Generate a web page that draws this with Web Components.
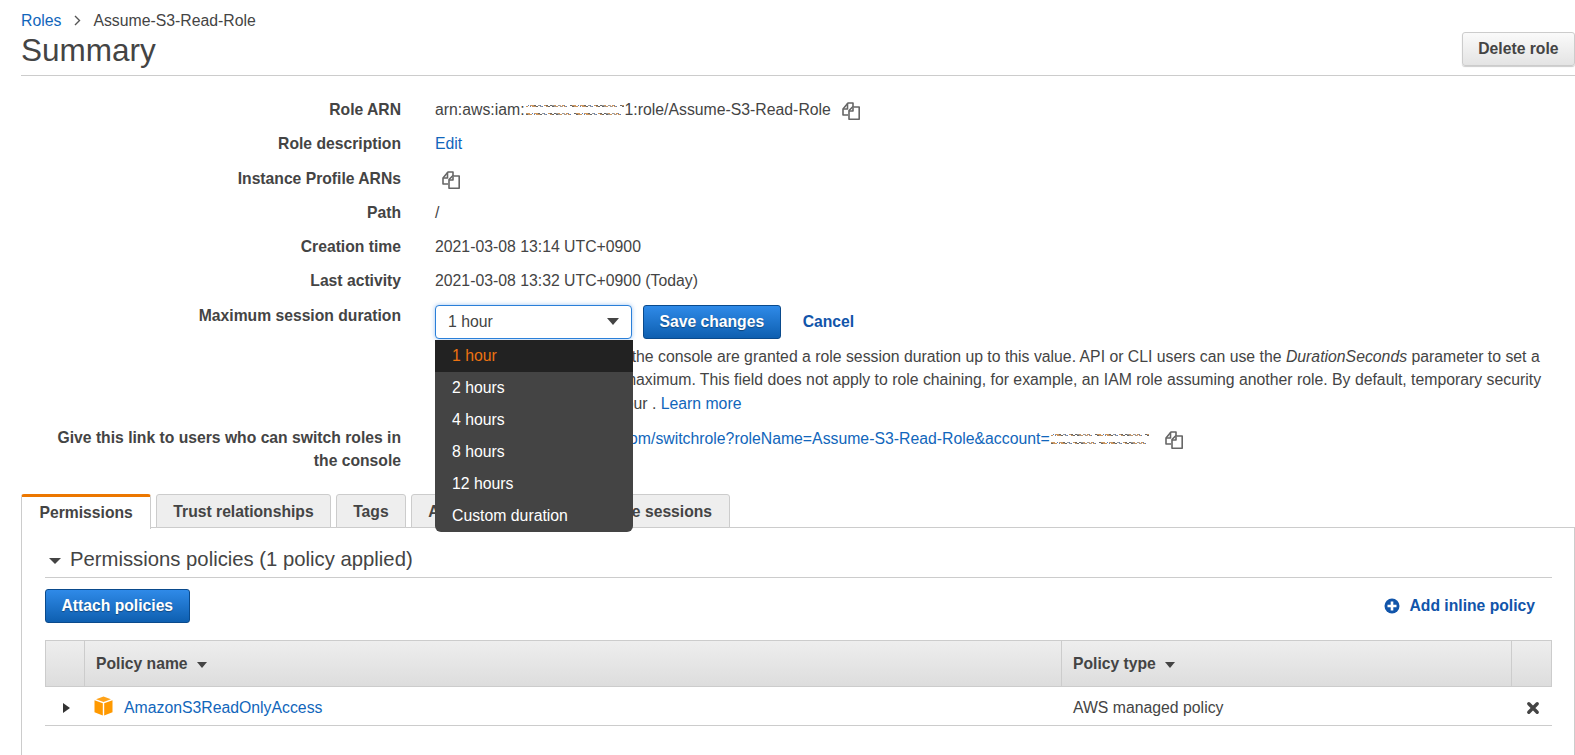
<!DOCTYPE html>
<html>
<head>
<meta charset="utf-8">
<title>Assume-S3-Read-Role</title>
<style>
  html, body { margin: 0; padding: 0; background: #fff; }
  body { font: 15.8px/1.5 "Liberation Sans", Arial, sans-serif; color: #444; overflow: hidden; height: 755px; }
</style>
</head>
<body>
<role-page></role-page>

<script>
const COPY_ICON = `<svg width="20" height="20" viewBox="0 0 20 20" fill="none" stroke="#666" stroke-width="1.600" stroke-linejoin="round">
  <path d="M7 14H2V8l5-6h5v4"/><path d="M6.500 2.500V8H2"/>
  <path d="M8 18.200V9.500l3.500-3.500h6.700v12.200z" fill="#fff"/><path d="M12 6.500V10H8"/></svg>`;

class CopyIcon extends HTMLElement {
  constructor() {
    super();
    this.attachShadow({ mode: 'open' });
    this.shadowRoot.innerHTML = `<style>:host { display: inline-flex; width: 20px; height: 20px; }</style>${COPY_ICON}`;
  }
}
customElements.define('copy-icon', CopyIcon);

// the smudge that hides the account number
class RedactedId extends HTMLElement {
  constructor() {
    super();
    this.attachShadow({ mode: 'open' });
    const colors = ['#888', '#c9955f', '#5f7fb5', '#666', '#d8a880', '#999'];
    let dots = '', seed = 7;
    for (let row of [1, 2, 9, 10]) {
      for (let x = 1; x < 99; x += 2) {
        seed = (seed * 37 + 11) % 101;
        if (seed % 4 == 0) continue;
        dots += `<rect x="${x}" y="${row}" width="${1 + seed % 2}" height="1" fill="${colors[seed % 6]}"/>`;
      }
    }
    this.shadowRoot.innerHTML = `<style>:host { display: inline-block; width: 100px; height: 12px; vertical-align: -1px; }</style>
      <svg width="100" height="12">${dots}</svg>`;
  }
}
customElements.define('redacted-id', RedactedId);

class AwsButton extends HTMLElement {
  constructor() {
    super();
    this.attachShadow({ mode: 'open' });
    this.shadowRoot.innerHTML = `<style>
      :host { display: inline-flex; align-items: center; justify-content: center; box-sizing: border-box; height: 34px; padding: 0 15.500px;
        border-radius: 3px; font-weight: bold; font-size: 15.7px; white-space: nowrap;
        border: 1px solid #ccc; color: #444; background: linear-gradient(#fafafa, #e4e4e4); box-shadow: 0 1px 1px rgba(0,0,0,.2); }
      :host([primary]) { color: #fff; border-color: #0a4a8c; background: linear-gradient(#2f8ae8, #0e5fb0); box-shadow: none;
        text-shadow: 0 1px 1px rgba(0,0,0,.35); }
    </style><slot></slot>`;
  }
}
customElements.define('aws-button', AwsButton);

class DetailRow extends HTMLElement {
  constructor() {
    super();
    this.attachShadow({ mode: 'open' });
    this.shadowRoot.innerHTML = `<style>
      :host { display: grid; grid-template-columns: 380px 1fr; column-gap: 34px; min-height: 34.300px; align-items: start; }
      .label { font-weight: bold; font-size: 15.7px; text-align: right; padding-top: 4px; line-height: 23px; }
      .value { padding-top: 4px; line-height: 23px; min-width: 0; }
    </style>
    <div class="label"><slot name="label"></slot></div>
    <div class="value"><slot></slot></div>`;
  }
}
customElements.define('detail-row', DetailRow);

class DurationSelect extends HTMLElement {
  constructor() {
    super();
    this.attachShadow({ mode: 'open' });
    const items = ['1 hour', '2 hours', '4 hours', '8 hours', '12 hours', 'Custom duration'];
    this.shadowRoot.innerHTML = `<style>
      :host { display: block; position: relative; width: 197px; height: 34px; box-sizing: border-box; }
      .box { box-sizing: border-box; height: 34px; border: 1px solid #2a7fd8; border-radius: 4px; background: #fff;
        box-shadow: 0 0 4px rgba(60,140,230,.5); display: flex; align-items: center; justify-content: space-between; padding: 0 12px; }
      .arrow { width: 0; height: 0; border: 6.500px solid transparent; border-top: 7px solid #444; border-bottom: 0; }
      ul { position: absolute; z-index: 5; left: 0; top: 35px; width: 198px; margin: 0; padding: 0; list-style: none; background: #444;
        border-radius: 0 0 6px 6px; overflow: hidden; }
      li { height: 32px; line-height: 32px; padding-left: 17px; color: #fff; }
      li.sel { background: #222; color: #ec7211; }
    </style>
    <div class="box"><span>1 hour</span><span class="arrow"></span></div>
    <ul>${items.map((t, i) => `<li class="${i == 0 ? 'sel' : ''}">${t}</li>`).join('')}</ul>`;
  }
}
customElements.define('duration-select', DurationSelect);

class TabBar extends HTMLElement {
  constructor() {
    super();
    this.attachShadow({ mode: 'open' });
    const tabs = ['Permissions', 'Trust relationships', 'Tags', 'Access Advisor', 'Revoke sessions'];
    this.shadowRoot.innerHTML = `<style>
      :host { display: flex; gap: 4.500px; height: 34px; font-weight: bold; font-size: 15.7px; position: relative; z-index: 1; }
      div { box-sizing: border-box; height: 34px; padding: 0 16.500px; line-height: 33px; background: #eee; border: 1px solid #ccc;
        border-radius: 3px 3px 0 0; white-space: nowrap; }
      div.on { background: #fff; border-top: 3px solid #ec7700; border-bottom: 0; height: 35px; line-height: 31px; padding: 0 17.500px; }
    </style>${tabs.map((t, i) => `<div class="${i == 0 ? 'on' : ''}">${t}</div>`).join('')}`;
  }
}
customElements.define('tab-bar', TabBar);

class PolicyTable extends HTMLElement {
  constructor() {
    super();
    this.attachShadow({ mode: 'open' });
    const sortArrow = '<i class="sort"></i>';
    this.shadowRoot.innerHTML = `<style>
      :host { display: block; width: 1507px; margin-top: 17px; }
      .row { display: grid; grid-template-columns: 38px 977px 450px 40px; align-items: stretch; }
      .head { height: 47px; box-sizing: border-box; border: 1px solid #ccc; background: linear-gradient(#eee, #ddd); font-weight: bold; font-size: 15.7px; }
      .head > div { border-left: 1px solid #ccc; padding-left: 11px; display: flex; align-items: center; }
      .head > div:first-child { border-left: 0; }
      .sort { display: inline-block; margin-left: 9px; margin-top: 2px; width: 0; height: 0; border: 5.500px solid transparent; border-top: 6px solid #444; border-bottom: 0; }
      .body { height: 39px; border-bottom: 1px solid #ccc; box-sizing: border-box; padding: 3px 1px 0; }
      .body > div { display: flex; align-items: center; }
      .body .type { padding-left: 12px; }
      .name { padding-left: 10px; gap: 11px; }
      .caret { width: 0; height: 0; border: 5.500px solid transparent; border-left: 7px solid #333; border-right: 0; margin-left: 17px; }
      a { color: #16b; text-decoration: none; }
      svg { flex: none; margin-top: -4px; }
      .x { justify-content: flex-end; padding-right: 11px; }
    </style>
    <div class="row head">
      <div></div>
      <div>Policy name ${sortArrow}</div>
      <div>Policy type ${sortArrow}</div>
      <div></div>
    </div>
    <div class="row body">
      <div><span class="caret"></span></div>
      <div class="name">
        <svg width="19" height="20" viewBox="0 0 19 20">
          <path d="M9.500 .500 17 3.200 9.500 6 2 3.200z" fill="#ffa31a"/>
          <path d="M.500 4.300 8.800 7.300V19.500L.500 16.300z" fill="#f90"/>
          <path d="M18.500 4.300 10.200 7.300V19.500L18.500 16.300z" fill="#f90"/>
        </svg>
        <a>AmazonS3ReadOnlyAccess</a>
      </div>
      <div class="type">AWS managed policy</div>
      <div class="x"><svg width="14" height="14" viewBox="0 0 14 14" style="margin:0"><path d="M2.800 2.800l8.400 8.400M11.200 2.800l-8.400 8.400" stroke="#444" stroke-width="3.400" stroke-linecap="round"/></svg></div>
    </div>`;
  }
}
customElements.define('policy-table', PolicyTable);

class RolePage extends HTMLElement {
  constructor() {
    super();
    this.attachShadow({ mode: 'open' });
    this.shadowRoot.innerHTML = `<style>
      :host { display: block; padding: 0 0 0 21px; height: 755px; box-sizing: border-box; overflow: hidden; }
      a { color: #16b; text-decoration: none; }
      .crumbs { padding-top: 9px; line-height: 23px; display: flex; align-items: center; }
      .crumbs svg { margin: 0 12px 0 13px; }
      .title { display: flex; justify-content: space-between; align-items: flex-end; height: 43px; border-bottom: 1px solid #ccc; }
      h1 { margin: 0; font-size: 31.500px; font-weight: normal; line-height: 37px; align-self: flex-start; }
      .title aws-button { margin-bottom: 9px; }
      .details { padding-top: 18px; height: 418px; box-sizing: border-box; }
      .actions { display: flex; align-items: center; gap: 11px; margin-top: 1px; }
      .cancel { font-weight: bold; font-size: 15.7px; margin-left: 11px; color: #15a; }
      .help { line-height: 23.500px; margin-top: 6px; margin-bottom: 7px; white-space: nowrap; }
      .copy-inline { vertical-align: -6px; margin-left: 10px; }
      .copy-link { margin-left: 14px; }
      .copy-first { margin-left: 6px; margin-top: 3px; }
      .switch-link { padding-top: 1px; white-space: nowrap; }
      .panel { border: 1px solid #ccc; border-bottom: 0; margin-top: -1px; padding: 14px 0 0 23px; height: 240px; }
      h2 { margin: 0; font-size: 20.300px; font-weight: normal; line-height: 33px; height: 36px; box-sizing: border-box; width: 1507px; border-bottom: 1px solid #ccc;
        display: flex; align-items: center; gap: 6px; }
      h2 i { width: 0; height: 0; border: 6px solid transparent; border-top: 6px solid #444; border-bottom: 0; margin: 3px 3px 0 4px; }
      .tools { display: flex; justify-content: space-between; align-items: center; width: 1507px; margin-top: 11px; }
      .inline { display: flex; align-items: center; gap: 9px; font-weight: bold; font-size: 15.7px; color: #15a; padding-right: 17px; }
    </style>
    <div class="crumbs"><a>Roles</a>
      <svg width="7" height="11" viewBox="0 0 7 11" fill="none" stroke="#555" stroke-width="1.400"><path d="M1 1l4.500 4.500L1 10"/></svg>
      <span>Assume-S3-Read-Role</span></div>
    <div class="title"><h1>Summary</h1><aws-button>Delete role</aws-button></div>

    <div class="details">
      <detail-row><span slot="label">Role ARN</span>arn:aws:iam:<redacted-id></redacted-id>1:role/Assume-S3-Read-Role<copy-icon class="copy-inline"></copy-icon></detail-row>
      <detail-row><span slot="label">Role description</span><a>Edit</a></detail-row>
      <detail-row><span slot="label">Instance Profile ARNs</span><copy-icon class="copy-first"></copy-icon></detail-row>
      <detail-row><span slot="label">Path</span>/</detail-row>
      <detail-row><span slot="label">Creation time</span>2021-03-08 13:14 UTC+0900</detail-row>
      <detail-row><span slot="label">Last activity</span>2021-03-08 13:32 UTC+0900 (Today)</detail-row>
      <detail-row><span slot="label">Maximum session duration</span>
        <div class="actions"><duration-select></duration-select><aws-button primary>Save changes</aws-button><a class="cancel">Cancel</a></div>
        <div class="help">Users who adopt the role in the console are granted a role session duration up to this value. API or CLI users can use the <em>DurationSeconds</em> parameter to set a<br>
        session duration up to this maximum. This field does not apply to role chaining, for example, an IAM role assuming another role. By default, temporary security<br>
        credentials are valid for 1 hour . <a>Learn more</a></div>
      </detail-row>
      <detail-row><span slot="label">Give this link to users who can switch roles in<br>the console</span>
        <div class="switch-link"><a>https://signin.aws.amazon.com/switchrole?roleName=Assume-S3-Read-Role&amp;account=</a><redacted-id></redacted-id><copy-icon class="copy-inline copy-link"></copy-icon></div></detail-row>
    </div>

    <tab-bar></tab-bar>
    <div class="panel">
      <h2><i></i>Permissions policies (1 policy applied)</h2>
      <div class="tools">
        <aws-button primary>Attach policies</aws-button>
        <span class="inline"><svg width="16" height="16" viewBox="0 0 16 16"><circle cx="8" cy="8" r="7.500" fill="#15a"/><path d="M8 3.500v9M3.500 8h9" stroke="#fff" stroke-width="2.600"/></svg>Add inline policy</span>
      </div>
      <policy-table></policy-table>
    </div>`;
  }
}
customElements.define('role-page', RolePage);
</script>
</body>
</html>
